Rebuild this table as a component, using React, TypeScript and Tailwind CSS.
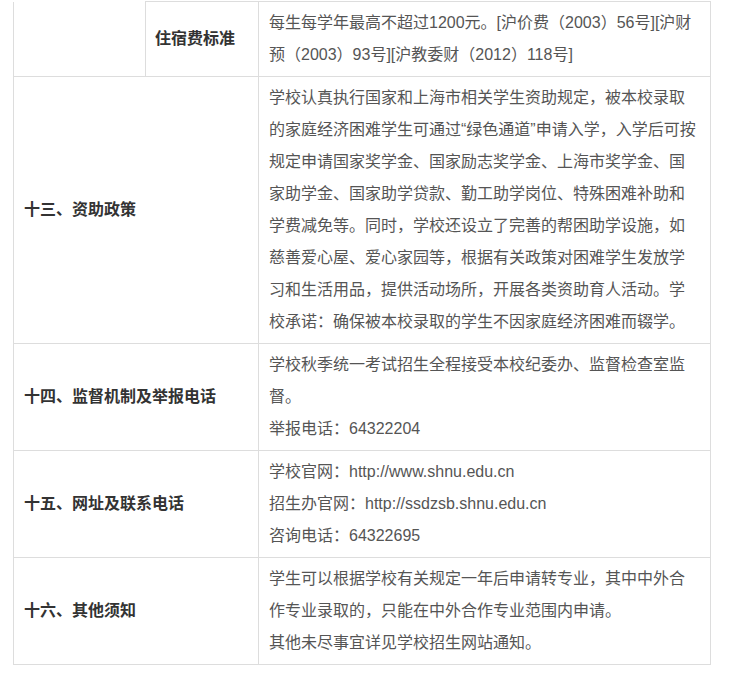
import React from 'react';

const FONT = '"Liberation Sans", "Noto Sans CJK SC", sans-serif';

// narrow Latin quotes, as the source page renders them
const Q = ({ c }: { c: string }) => (
  <span style={{ fontFamily: '"Liberation Sans", sans-serif' }}>{c}</span>
);

interface Row {
  head: string;
  lines: React.ReactNode[];
}

const rows: Row[] = [
  {
    head: '十三、资助政策',
    lines: [
      '学校认真执行国家和上海市相关学生资助规定，被本校录取',
      <>的家庭经济困难学生可通过<Q c="“" />绿色通道<Q c="”" />申请入学，入学后可按</>,
      '规定申请国家奖学金、国家励志奖学金、上海市奖学金、国',
      '家助学金、国家助学贷款、勤工助学岗位、特殊困难补助和',
      '学费减免等。同时，学校还设立了完善的帮困助学设施，如',
      '慈善爱心屋、爱心家园等，根据有关政策对困难学生发放学',
      '习和生活用品，提供活动场所，开展各类资助育人活动。学',
      '校承诺：确保被本校录取的学生不因家庭经济困难而辍学。',
    ],
  },
  {
    head: '十四、监督机制及举报电话',
    lines: ['学校秋季统一考试招生全程接受本校纪委办、监督检查室监', '督。', '举报电话：64322204'],
  },
  {
    head: '十五、网址及联系电话',
    lines: ['学校官网：http://www.shnu.edu.cn', '招生办官网：http://ssdzsb.shnu.edu.cn', '咨询电话：64322695'],
  },
  {
    head: '十六、其他须知',
    lines: ['学生可以根据学校有关规定一年后申请转专业，其中中外合', '作专业录取的，只能在中外合作专业范围内申请。', '其他未尽事宜详见学校招生网站通知。'],
  },
];

const cell = 'border border-[#dddddd] pr-3 py-[5px] align-middle';

function Lines({ lines }: { lines: React.ReactNode[] }) {
  return (
    <>
      {lines.map((l, i) => (
        <div key={i} className="whitespace-nowrap">{l}</div>
      ))}
    </>
  );
}

export default function App() {
  return (
    <div className="bg-white w-[730px] h-[676px] pt-px" style={{ fontFamily: FONT }}>
      <table className="ml-[13px] w-[697px] table-fixed border-collapse text-[16px] leading-[32px]">
        <colgroup>
          <col className="w-[132px]" />
          <col className="w-[113px]" />
          <col className="w-[452px]" />
        </colgroup>
        <tbody>
          <tr>
            <td className={`${cell} border-t-0`} />
            <td className={`${cell} font-bold text-[#333333] pl-[9px]`}>住宿费标准</td>
            <td className={`${cell} text-[#555555] pl-[10px]`}>
              <Lines lines={['每生每学年最高不超过1200元。[沪价费（2003）56号][沪财', '预（2003）93号][沪教委财（2012）118号]']} />
            </td>
          </tr>
          {rows.map(r => (
            <tr key={r.head}>
              <td colSpan={2} className={`${cell} font-bold text-[#333333] pl-[10px]`}>{r.head}</td>
              <td className={`${cell} text-[#555555] pl-[10px]`}>
                <Lines lines={r.lines} />
              </td>
            </tr>
          ))}
        </tbody>
      </table>
    </div>
  );
}
